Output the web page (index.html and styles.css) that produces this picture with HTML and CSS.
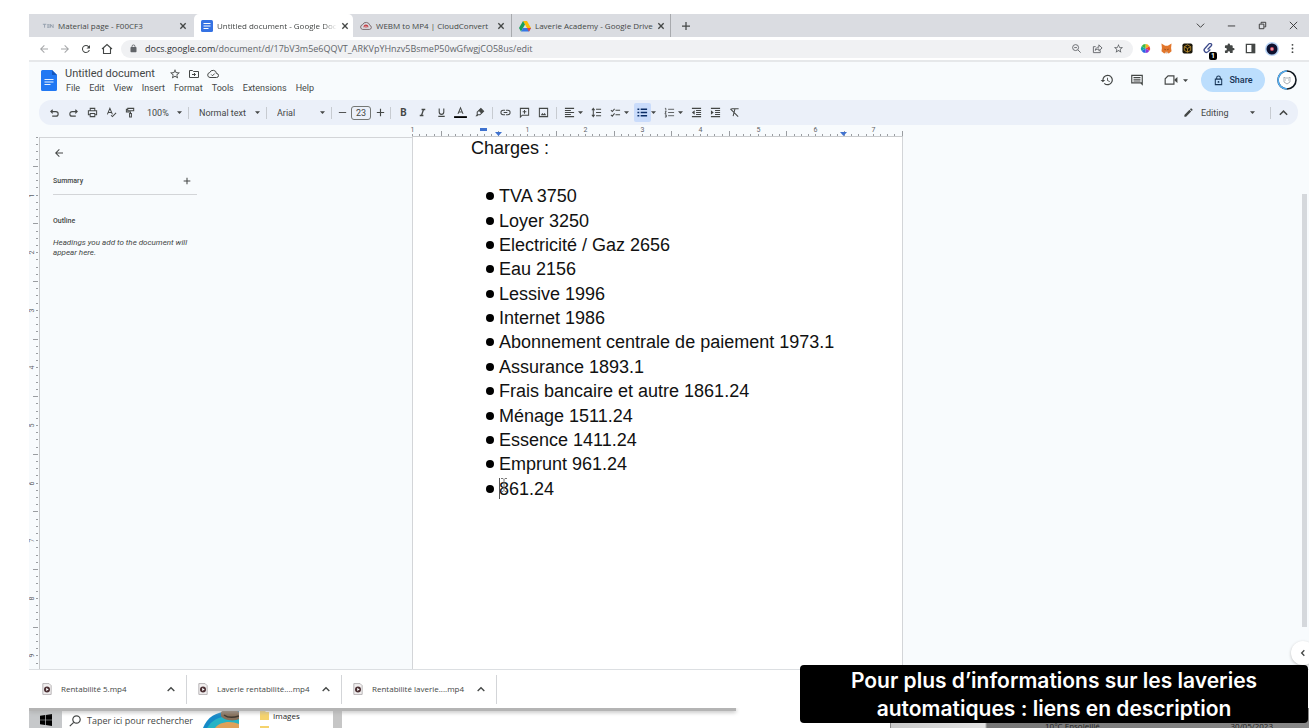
FILE: index.html
```html
<!DOCTYPE html>
<html lang="fr">
<head>
  <meta charset="UTF-8" />
  <meta name="viewport" content="width=device-width, initial-scale=1.0"/>
  <title>Untitled document - Google Docs</title>
  <link rel="stylesheet" href="styles.css">
</head>
<body>
  <svg class="defs" aria-hidden="true">
    <symbol id="close" viewBox="0 0 12 12"><path d="M2 2l8 8M10 2l-8 8" fill="none" stroke="currentColor" stroke-width="2"/></symbol>
    <symbol id="arrow" viewBox="0 0 10 10"><path d="M0 2.5h10L5 8z"/></symbol>
    <symbol id="up" viewBox="0 0 12 12"><path d="M2 8.5l4-4 4 4" fill="none" stroke="currentColor" stroke-width="1.600"/></symbol>
    <symbol id="back" viewBox="0 0 24 24"><path d="M20 11H7.83l5.59-5.59L12 4l-8 8 8 8 1.41-1.41L7.83 13H20v-2z"/></symbol>
    <symbol id="plus" viewBox="0 0 24 24"><path d="M20 13.250h-6.750V20h-2.500v-6.750H4v-2.500h6.750V4h2.500v6.750H20z"/></symbol>
    <symbol id="star" viewBox="0 0 24 24"><path d="M22 9.24l-7.19-.62L12 2 9.19 8.63 2 9.24l5.46 4.73L5.82 21 12 17.27 18.18 21l-1.63-7.03L22 9.24zM12 15.4l-3.76 2.27 1-4.28-3.32-2.88 4.38-.38L12 6.1l1.71 4.04 4.38.38-3.32 2.88 1 4.28L12 15.4z"/></symbol>
    <symbol id="lock" viewBox="0 0 24 24"><path d="M18 8h-1V6A5 5 0 0 0 7 6v2H6a2 2 0 0 0-2 2v10a2 2 0 0 0 2 2h12a2 2 0 0 0 2-2V10a2 2 0 0 0-2-2zM9 6a3 3 0 0 1 6 0v2H9z"/></symbol>
    <symbol id="video-file" viewBox="0 0 12 14"><path d="M1 .5h7.500L11 3v10.500H1z" fill="#f3f0f0" stroke="#aaa6a8"/><circle cx="6" cy="7.500" r="3.600" fill="#4b3034"/><path d="M5 5.500l3 2-3 2z" fill="#fff"/></symbol>
  </svg>

  <main class="browser">
    <div class="tabs">
      <div class="tab">
        <svg viewBox="0 0 14 12" fill="none" stroke="#8f9aa8"><path d="M1 4h4M3 4v4M6 4.500h3M6 6h3M6 7.500h3M10 8V4l3 4V4"/></svg>
        <span>Material page - F00CF3</span>
        <button aria-label="Fermer"><svg><use href="#close"/></svg></button>
      </div>
      <div class="tab active">
        <svg viewBox="0 0 12 12"><rect width="12" height="12" rx="1.500" fill="#3572e3"/><path d="M2.500 3.500h7M2.500 6h7M2.500 8.500h5" stroke="#fff" stroke-width="1.200"/></svg>
        <span>Untitled document - Google Doc</span>
        <button aria-label="Fermer"><svg><use href="#close"/></svg></button>
      </div>
      <div class="tab">
        <svg viewBox="0 0 14 12" fill="none" stroke="#6d5a5e"><path d="M3 10h8a2.400 2.400 0 0 0 .5-4.700A4.500 4.500 0 0 0 3 4.500 2.800 2.800 0 0 0 3 10z"/><path d="M4.800 7.500a2.200 2.200 0 1 1 4.300 0M7 8V5.500" stroke="#c73f45" stroke-width="1.300"/></svg>
        <span>WEBM to MP4 | CloudConvert</span>
        <button aria-label="Fermer"><svg><use href="#close"/></svg></button>
      </div>
      <div class="tab">
        <svg viewBox="0 0 24 22"><path d="M8 1h8l8 14h-8z" fill="#fbbc05"/><path d="M8 1l4 7-8 14-4-7z" fill="#169f59"/><path d="M8 15h16l-4 7H4z" fill="#3577e5"/><path d="M16 15h8l-4 7z" fill="#e94435"/></svg>
        <span>Laverie Academy - Google Drive</span>
        <button aria-label="Fermer"><svg><use href="#close"/></svg></button>
      </div>
      <button class="new-tab" aria-label="Nouvel onglet"><svg><use href="#plus"/></svg></button>
      <div class="window-buttons">
        <button aria-label="Rechercher"><svg viewBox="0 0 12 12"><path d="M2 4l4 4 4-4"/></svg></button>
        <button aria-label="Réduire"><svg viewBox="0 0 12 12"><path d="M2 6.500h8"/></svg></button>
        <button aria-label="Agrandir"><svg viewBox="0 0 12 12"><path d="M2.500 4.500h5v5h-5zM4.500 4V2.500h5v5H8"/></svg></button>
        <button aria-label="Quitter"><svg viewBox="0 0 12 12"><path d="M2 2l8 8M10 2l-8 8"/></svg></button>
      </div>
    </div>

    <div class="address-bar">
      <div class="nav">
        <button class="off" aria-label="Précédent"><svg><use href="#back"/></svg></button>
        <button class="off" aria-label="Suivant"><svg class="flip"><use href="#back"/></svg></button>
        <button aria-label="Actualiser"><svg viewBox="0 0 24 24"><path d="M17.650 6.350A8 8 0 1 0 19.730 14h-2.080A6 6 0 1 1 12 6c1.660 0 3.140.69 4.220 1.780L13 11h7V4l-2.350 2.350z"/></svg></button>
        <button aria-label="Accueil"><svg viewBox="0 0 24 24"><path d="M2 12l10-9 10 9M5 10v11h14V10" fill="none" stroke="currentColor" stroke-width="2.200"/></svg></button>
      </div>
      <div class="omnibox">
        <svg class="small"><use href="#lock"/></svg>
        <span class="url"><b>docs.google.com</b>/document/d/17bV3m5e6QQVT_ARKVpYHnzv5BsmeP50wGfwgjCO58us/edit</span>
        <button aria-label="Zoom"><svg viewBox="0 0 24 24" fill="none" stroke="currentColor" stroke-width="2"><circle cx="10" cy="10" r="6.500"/><path d="M15 15l6 6M7 10h6"/></svg></button>
        <button aria-label="Partager"><svg viewBox="0 0 24 24" fill="none" stroke="currentColor" stroke-width="2"><path d="M8 8H3v13h15v-5M7 16c1-5 4-7 8-7V4l7 7-7 6v-4c-3 0-6 1-8 3z"/></svg></button>
        <button aria-label="Favori"><svg><use href="#star"/></svg></button>
      </div>
      <div class="extensions">
        <button aria-label="Couleurs"><svg viewBox="0 0 12 12"><path d="M6 6V1a5 5 0 0 1 4.300 2.500z" fill="#f6b51d"/><path d="M6 6l4.300-2.500a5 5 0 0 1 0 5z" fill="#ee4433"/><path d="M6 6l4.300 2.500A5 5 0 0 1 6 11z" fill="#8d36d8"/><path d="M6 6v5a5 5 0 0 1-4.300-2.500z" fill="#2866e2"/><path d="M6 6L1.700 8.500a5 5 0 0 1 0-5z" fill="#13a7a7"/><path d="M6 6L1.700 3.500A5 5 0 0 1 6 1z" fill="#42b840"/></svg></button>
        <button aria-label="MetaMask"><svg viewBox="0 0 12 12"><path d="M.5.5L4.500 3h3l4-2.500-.5 5 .5 3.500-3 2.500-1.500-1H5l-1.500 1L.5 9 1 5.500z" fill="#e2762b"/><path d="M3 6l2 1v1zM9 6L7 7v1z" fill="#3a2216"/><path d="M4.500 9.500h3l-.5 2H5z" fill="#d9b9a0"/></svg></button>
        <button aria-label="Portefeuille"><svg viewBox="0 0 12 12"><rect x=".5" y=".5" width="11" height="11" rx="2" fill="#191509"/><path d="M6 2l3.500 2v4L6 10 2.500 8V4zM2.500 4L6 6l3.500-2M6 6v4" fill="none" stroke="#c2912c" stroke-width=".9"/></svg></button>
        <button class="badged" aria-label="Liens"><svg viewBox="0 0 12 12" fill="none" stroke="#3c4a8a" stroke-width="1.500"><path d="M5 7l4-4a1.600 1.600 0 0 0-2.500-2L2 6a2.400 2.400 0 0 0 3.500 3.400L8 7"/></svg><i>1</i></button>
        <button aria-label="Extensions"><svg viewBox="0 0 24 24"><path d="M20.500 11H19V7a2 2 0 0 0-2-2h-4V3.500a2.500 2.500 0 0 0-5 0V5H4a2 2 0 0 0-2 2v3.800h1.500a2.700 2.700 0 0 1 0 5.400H2V20a2 2 0 0 0 2 2h3.800v-1.500a2.700 2.700 0 0 1 5.400 0V22H17a2 2 0 0 0 2-2v-4h1.500a2.500 2.500 0 0 0 0-5z"/></svg></button>
        <button aria-label="Panneau latéral"><svg viewBox="0 0 12 12"><path d="M1.500 1.500h9v9h-9z" fill="none" stroke="currentColor" stroke-width="1.400"/><path d="M7 1h4v10H7z"/></svg></button>
        <button aria-label="Profil"><svg class="profile" viewBox="0 0 14 14"><circle cx="7" cy="7" r="7" fill="#b7d3f5"/><circle cx="7" cy="7" r="5.500" fill="#0d1230"/><circle cx="7" cy="7" r="2" fill="#d34a60"/><circle cx="7" cy="7" r=".8" fill="#fff"/></svg></button>
        <button aria-label="Menu"><svg viewBox="0 0 24 24"><circle cx="12" cy="4" r="2"/><circle cx="12" cy="12" r="2"/><circle cx="12" cy="20" r="2"/></svg></button>
      </div>
    </div>

    <header class="docs-header">
      <svg class="docs-logo" viewBox="0 0 16 21"><path d="M1.500 0H11l5 5v14.500a1.500 1.500 0 0 1-1.500 1.500h-13A1.500 1.500 0 0 1 0 19.500v-18A1.500 1.500 0 0 1 1.500 0z" fill="#2178f3"/><path d="M11 0l5 5h-5z" fill="#1356bd"/><path d="M3.500 9.500h9M3.500 12h9M3.500 14.500h6" stroke="#e8f1ff" stroke-width="1.200"/></svg>
      <div class="doc-info">
        <div class="doc-title">
          <h1>Untitled document</h1>
          <button aria-label="Suivre"><svg><use href="#star"/></svg></button>
          <button aria-label="Déplacer"><svg viewBox="0 0 24 24"><path d="M3 5h6l2 2h10v12H3zM8 13h7M12 10l3 3-3 3" fill="none" stroke="currentColor" stroke-width="2"/></svg></button>
          <button aria-label="Enregistré"><svg viewBox="0 0 24 24"><path d="M6 19a5 5 0 0 1-.5-9.900A7 7 0 0 1 19 11a4 4 0 0 1 0 8zM8.500 13l2.500 2.500 4.500-4.500" fill="none" stroke="currentColor" stroke-width="2"/></svg></button>
        </div>
        <nav class="menu">
          <a href="#">File</a>
          <a href="#">Edit</a>
          <a href="#">View</a>
          <a href="#">Insert</a>
          <a href="#">Format</a>
          <a href="#">Tools</a>
          <a href="#">Extensions</a>
          <a href="#">Help</a>
        </nav>
      </div>
      <div class="doc-actions">
        <button aria-label="Historique"><svg viewBox="0 0 24 24"><path d="M13 3a9 9 0 0 0-9 9H1l4 4 4-4H6a7 7 0 1 1 2.060 4.940L6.640 18.360A9 9 0 1 0 13 3zm-1 5v5l4.280 2.540.72-1.210-3.500-2.080V8H12z"/></svg></button>
        <button aria-label="Commentaires"><svg viewBox="0 0 24 24"><path d="M2 3h20v19l-4-4H2zM4 5v11h16V5zM6 7h12v1.500H6zM6 10h12v1.500H6zM6 13h12v1.500H6z" fill-rule="evenodd"/></svg></button>
        <button class="meet" aria-label="Appel"><svg viewBox="0 0 24 24"><path d="M7 5h10v14H2v-9z" fill="none" stroke="currentColor" stroke-width="2"/><path d="M18 11l5-4v10l-5-4z"/></svg><svg class="arrow"><use href="#arrow"/></svg></button>
        <button class="share"><svg viewBox="0 0 24 24"><path d="M5 9h14v12H5zM8 9V6a4 4 0 0 1 8 0v3" fill="none" stroke="currentColor" stroke-width="2.200"/><circle cx="12" cy="15" r="2"/></svg>Share</button>
        <button aria-label="Compte"><svg class="avatar" viewBox="0 0 20 20"><circle cx="10" cy="10" r="9" fill="#fff" stroke="#101820" stroke-width="1.600"/><path d="M10 1a9 9 0 0 0 0 18" fill="none" stroke="#55aef2" stroke-width="1.600"/><path d="M7 7l1 1h4l1-1v5l-3 2-3-2zM8 10h1M11 10h1" fill="none" stroke="#aab0b5"/></svg></button>
      </div>
    </header>

    <div class="format-bar">
      <button class="tool" aria-label="Annuler"><svg viewBox="0 0 24 24"><path d="M8 6l-4 4 4 4M4 10h11a5 5 0 0 1 0 10H7" fill="none" stroke="currentColor" stroke-width="2.400"/></svg></button>
      <button class="tool" aria-label="Rétablir"><svg viewBox="0 0 24 24"><path d="M16 6l4 4-4 4M20 10H9a5 5 0 0 0 0 10h8" fill="none" stroke="currentColor" stroke-width="2.400"/></svg></button>
      <button class="tool" aria-label="Imprimer"><svg viewBox="0 0 24 24"><path d="M7 8V3h10v5M6 17H3V8h18v9h-3M7 14h10v7H7z" fill="none" stroke="currentColor" stroke-width="2.200"/></svg></button>
      <button class="tool" aria-label="Orthographe"><svg viewBox="0 0 24 24"><path d="M3 16L8.500 3 14 16M5 12h7M11 18l3 3 8-8" fill="none" stroke="currentColor" stroke-width="2.200"/></svg></button>
      <button class="tool" aria-label="Reproduire"><svg viewBox="0 0 24 24"><path d="M6 3h13v5H6zM6 5H3v6h9v3M10 14h4v8h-4z" fill="none" stroke="currentColor" stroke-width="2.200"/></svg></button>
      <label class="drop zoom"><select aria-label="Zoom"><option>100%</option></select><svg class="arrow"><use href="#arrow"/></svg></label>
      <hr>
      <label class="drop style"><select aria-label="Style"><option>Normal text</option></select><svg class="arrow"><use href="#arrow"/></svg></label>
      <hr>
      <label class="drop font"><select aria-label="Police"><option>Arial</option></select><svg class="arrow"><use href="#arrow"/></svg></label>
      <hr>
      <button class="step" aria-label="Diminuer"><svg viewBox="0 0 24 24"><path d="M4 11h16v2H4z"/></svg></button>
      <input class="size" type="text" value="23" aria-label="Taille">
      <button class="step" aria-label="Augmenter"><svg><use href="#plus"/></svg></button>
      <hr>
      <button class="tool" aria-label="Gras"><b>B</b></button>
      <button class="tool" aria-label="Italique"><svg viewBox="0 0 24 24"><path d="M10 4v3h2.200l-3.400 10H6v3h8v-3h-2.200l3.400-10H18V4z"/></svg></button>
      <button class="tool" aria-label="Souligné"><svg viewBox="0 0 24 24"><path d="M7 3v8a5 5 0 0 0 10 0V3M5 20.500h14" fill="none" stroke="currentColor" stroke-width="2.400"/></svg></button>
      <button class="tool" aria-label="Couleur"><svg class="text-color" viewBox="0 0 24 24"><path d="M6.500 15L12 2l5.500 13M8 11h8" fill="none" stroke="currentColor" stroke-width="2.200"/><path d="M-2 20h28v4H-2z" fill="#000"/></svg></button>
      <button class="tool" aria-label="Surligner"><svg viewBox="0 0 24 24"><path d="M7 11l8-8 6 6-8 8H7z" fill="none" stroke="currentColor" stroke-width="2.200"/><path d="M10 8l6 6 5-5-6-6zM3 20l4-4 2 2-2 2z"/></svg></button>
      <hr>
      <button class="tool" aria-label="Lien"><svg viewBox="0 0 24 24"><path d="M11 7H7a5 5 0 0 0 0 10h4M13 7h4a5 5 0 0 1 0 10h-4M8 12h8" fill="none" stroke="currentColor" stroke-width="2.200"/></svg></button>
      <button class="tool" aria-label="Commenter"><svg viewBox="0 0 24 24"><path d="M3 3h18v15H7l-4 4zM12 6.500v8M8 10.500h8" fill="none" stroke="currentColor" stroke-width="2.200"/></svg></button>
      <button class="tool" aria-label="Image"><svg viewBox="0 0 24 24"><path d="M3 3h18v18H3z" fill="none" stroke="currentColor" stroke-width="2.200"/><path d="M6 18l3.500-5 2.500 3 2.500-3 3.500 5z"/></svg></button>
      <hr>
      <button class="split" aria-label="Aligner"><svg viewBox="0 0 24 24"><path d="M2 3h20M2 7.500h13M2 12h20M2 16.500h13M2 21h20" stroke="currentColor" stroke-width="2.200"/></svg><svg class="arrow"><use href="#arrow"/></svg></button>
      <button class="tool" aria-label="Interligne"><svg viewBox="0 0 24 24"><path d="M11 5h11M11 12h11M11 19h11M5 4v16M2 7l3-4 3 4M2 17l3 4 3-4" fill="none" stroke="currentColor" stroke-width="2.200"/></svg></button>
      <button class="split" aria-label="Liste de contrôle"><svg viewBox="0 0 24 24"><path d="M12 7h10M12 17h10M2 7l3 3 5-6M2 17l3 3 5-6" fill="none" stroke="currentColor" stroke-width="2.200"/></svg><svg class="arrow"><use href="#arrow"/></svg></button>
      <button class="split on" aria-label="Liste à puces"><span><svg viewBox="0 0 24 24"><path d="M8 5h14M8 12h14M8 19h14M1 5h4M1 12h4M1 19h4" stroke="currentColor" stroke-width="3"/></svg></span><svg class="arrow"><use href="#arrow"/></svg></button>
      <button class="split" aria-label="Liste numérotée"><svg viewBox="0 0 24 24"><path d="M9 5h13M9 12h13M9 19h13M2 3h2v5M2 10h3l-3 4h3M2 17h3v5H2M3 19.500h2" fill="none" stroke="currentColor" stroke-width="1.800"/></svg><svg class="arrow"><use href="#arrow"/></svg></button>
      <button class="tool" aria-label="Retrait moins"><svg viewBox="0 0 24 24"><path d="M2 3h20M11 7.500h11M11 12h11M11 16.500h11M2 21h20" stroke="currentColor" stroke-width="2.200"/><path d="M8 7v10l-6-5z"/></svg></button>
      <button class="tool" aria-label="Retrait plus"><svg viewBox="0 0 24 24"><path d="M2 3h20M11 7.500h11M11 12h11M11 16.500h11M2 21h20" stroke="currentColor" stroke-width="2.200"/><path d="M2 7v10l6-5z"/></svg></button>
      <button class="tool" aria-label="Effacer"><svg viewBox="0 0 24 24"><path d="M5 4h16M13 4l-4 16M3 4l17 17" fill="none" stroke="currentColor" stroke-width="2.200"/></svg></button>
      <div class="mode">
        <svg viewBox="0 0 24 24"><path d="M3 17.250V21h3.750L17.810 9.940l-3.750-3.750zM20.710 7.040a1 1 0 0 0 0-1.410l-2.340-2.340a1 1 0 0 0-1.410 0l-1.830 1.830 3.750 3.750z"/></svg>
        <label class="drop editing"><select aria-label="Mode"><option>Editing</option></select><svg class="arrow"><use href="#arrow"/></svg></label>
        <hr>
        <button class="step" aria-label="Masquer"><svg><use href="#up"/></svg></button>
      </div>
    </div>

    <div class="ruler-row">
      <svg class="ruler" id="ruler-h"></svg>
    </div>

    <div class="workspace">
      <div class="left">
        <svg class="ruler" id="ruler-v"></svg>
        <aside class="outline">
          <button class="close-outline" aria-label="Fermer le plan"><svg><use href="#back"/></svg></button>
          <div class="summary">
            <h2>Summary</h2>
            <button aria-label="Ajouter un résumé"><svg><use href="#plus"/></svg></button>
          </div>
          <h2>Outline</h2>
          <p>Headings you add to the document will appear here.</p>
        </aside>
      </div>
      <article class="page">
        <p>Charges :</p>
        <ul>
          <li>TVA 3750</li>
          <li>Loyer 3250</li>
          <li>Electricité / Gaz 2656</li>
          <li>Eau 2156</li>
          <li>Lessive 1996</li>
          <li>Internet 1986</li>
          <li>Abonnement centrale de paiement 1973.1</li>
          <li>Assurance 1893.1</li>
          <li>Frais bancaire et autre 1861.24</li>
          <li>Ménage 1511.24</li>
          <li>Essence 1411.24</li>
          <li>Emprunt 961.24</li>
          <li class="caret">861.24<svg class="pointer" viewBox="0 0 8 16" fill="none" stroke="#777"><path d="M1 1.500h2l1 1 1-1h2M4 2.500v11M1 14.500h2l1-1 1 1h2"/></svg></li>
        </ul>
      </article>
      <div class="scrollbar"><div class="thumb"></div></div>
      <button class="side-panel" aria-label="Panneau"><svg viewBox="0 0 12 12"><path d="M8 2L4 6l4 4" fill="none" stroke="currentColor" stroke-width="2"/></svg></button>
    </div>

    <footer class="downloads">
      <div class="download"><svg><use href="#video-file"/></svg><span>Rentabilité 5.mp4</span><button aria-label="Options"><svg><use href="#up"/></svg></button></div>
      <div class="download"><svg><use href="#video-file"/></svg><span>Laverie rentabilité....mp4</span><button aria-label="Options"><svg><use href="#up"/></svg></button></div>
      <div class="download"><svg><use href="#video-file"/></svg><span>Rentabilité laverie....mp4</span><button aria-label="Options"><svg><use href="#up"/></svg></button></div>
    </footer>
  </main>

  <div class="taskbar">
    <div class="window-edge"></div>
    <button class="start" aria-label="Démarrer"><svg viewBox="0 0 12 12"><path d="M0 1.700l5-.7v4.700H0zM5.700.9L12 0v5.700H5.700zM0 6.300h5V11l-5-.7zM5.700 6.300H12V12l-6.300-.9z"/></svg></button>
    <div class="search">
      <svg viewBox="0 0 12 12" fill="none" stroke="currentColor" stroke-width="1.200"><circle cx="7.500" cy="4.500" r="3.700"/><path d="M4.700 7.300L.8 11.200"/></svg>
      <span>Taper ici pour rechercher</span>
      <svg class="news" viewBox="0 0 36 17"><path d="M0 17C5 4 16-1 36 0v17z" fill="#168ac8"/><path d="M4 17C10 7 20 3 36 7v10z" fill="#25b3c5"/><path d="M12 17c4-6 15-8 24-4v4z" fill="#e0a159"/><path d="M18 1c3-3 14-3 18 0v7c-6 3-16 1-18-3z" fill="#86705b"/><path d="M21 4c4 3 9 3 15 1" fill="none" stroke="#40382f" stroke-width="1.500"/></svg>
    </div>
    <div class="explorer">
      <svg viewBox="0 0 9 18"><path d="M0 1h5l1 1h3v8H0zM0 16h9v2H0z" fill="#f5d36d"/></svg>
      <span>Images</span>
    </div>
    <div class="tray"><span>10°C Ensoleillé</span><time>30/05/2023</time></div>
  </div>

  <div class="caption">Pour plus d’informations sur les laveries automatiques : liens en description</div>

  <script src="script.js"></script>
</body>
</html>
```
FILE: styles.css
```css
* {
  box-sizing: border-box;
}
body {
  display: flex;
  flex-direction: column;
  height: 100vh;
  margin: 0;
  padding: 14px 4px 0 29px;
  overflow: hidden;
  background: #fff;
  color: #444746;
  font: 9px/12px Roboto, sans-serif;
}
button {
  display: flex;
  align-items: center;
  justify-content: center;
  flex: none;
  padding: 0;
  border: 0;
  background: none;
  color: inherit;
  font: inherit;
}
svg {
  display: block;
  flex: none;
  width: 12px;
  height: 12px;
}
svg:not([fill]) {
  fill: currentColor;
}
h1, h2, p, ul {
  margin: 0;
  padding: 0;
}
a {
  color: inherit;
  text-decoration: none;
}
.defs {
  display: none;
}
.arrow {
  width: 5px;
  height: 5px;
}
.browser {
  display: flex;
  flex: 1;
  flex-direction: column;
  min-height: 0;
  background: #f8fbfd;
}

/* Chrome */
.tabs {
  display: flex;
  align-items: center;
  height: 23px;
  background: #dadce1;
  font: 8px/12px "Open Sans", sans-serif;
}
.tab {
  display: flex;
  align-items: center;
  gap: 4px;
  width: 159px;
  height: 23px;
  padding: 0 6px 0 13px;
  border-right: 1px solid transparent;
}
.tab:nth-child(n+3) {
  border-color: #a8aaae;
  padding-left: 7px;
}
.tab:first-child {
  width: 165px;
}
.tab span {
  flex: 1;
  white-space: nowrap;
}
.tab button svg {
  width: 8px;
  height: 8px;
}
.tab.active {
  padding-left: 7px;
  border-radius: 5px 5px 0 0;
  background: #fff;
}
.tab.active span {
  mask-image: linear-gradient(to right, #000 88%, transparent);
}
.new-tab {
  width: 30px;
}
.window-buttons {
  display: flex;
  margin-left: auto;
}
.window-buttons button {
  width: 31px;
}
.window-buttons svg {
  width: 11px;
  height: 11px;
}
.window-buttons path {
  fill: none;
  stroke: #333;
}
.address-bar {
  display: flex;
  align-items: center;
  height: 25px;
  border-bottom: 2px solid #e6e8ea;
  background: #fff;
}
.nav, .extensions {
  display: flex;
  padding: 0 4px;
}
.nav button, .extensions button, .omnibox button {
  width: 21px;
}
.off {
  color: #a4a6a8;
}
.flip {
  transform: scaleX(-1);
}
.omnibox {
  display: flex;
  align-items: center;
  flex: 1;
  height: 18px;
  padding: 0 4px 0 8px;
  border-radius: 9px;
  background: #f0f1f3;
  color: #626569;
}
.url {
  flex: 1;
  margin-left: 7px;
  font-family: "Open Sans", sans-serif;
}
.url b {
  color: #303236;
  font-weight: 400;
}
.omnibox svg, .extensions svg {
  width: 11px;
  height: 11px;
}
.omnibox .small {
  width: 9px;
  height: 9px;
}
.extensions {
  padding: 0 6px 0 2px;
}
.extensions .profile {
  width: 14px;
  height: 14px;
}
.badged {
  position: relative;
}
.badged i {
  position: absolute;
  right: 2px;
  bottom: -4px;
  width: 8px;
  border-radius: 2px;
  background: #000;
  color: #fff;
  font: bold 7px/8px Roboto, sans-serif;
}

/* Docs header */
.docs-header {
  display: flex;
  align-items: center;
  height: 36px;
  margin-bottom: 2px;
  padding: 0 12px;
}
.docs-logo {
  width: 16px;
  height: 21px;
}
.doc-info {
  margin-left: 8px;
}
.doc-title {
  display: flex;
  align-items: center;
  gap: 7px;
  height: 16px;
}
.doc-title h1 {
  margin-right: 7px;
  font: 11px/16px Roboto, sans-serif;
}
.menu {
  display: flex;
  gap: 9px;
  margin-left: 1px;
}
.doc-actions {
  display: flex;
  align-items: center;
  gap: 16px;
  margin-left: auto;
}
.doc-actions svg {
  width: 14px;
  height: 14px;
}
.meet {
  gap: 5px;
  margin-left: 4px;
}
.doc-actions .arrow {
  width: 5px;
  height: 5px;
}
.doc-actions .share {
  gap: 5px;
  width: 64px;
  height: 24px;
  margin: 0 -4px 0 -3px;
  border-radius: 12px;
  background: #bcdefd;
  color: #173455;
  font-weight: 500;
}
.doc-actions .share svg {
  width: 11px;
  height: 11px;
}
.doc-actions .avatar {
  width: 20px;
  height: 20px;
}

/* Formatting toolbar */
.format-bar {
  display: flex;
  align-items: center;
  height: 25px;
  margin: 0 11px 0 10px;
  padding: 0 6px;
  border-radius: 12px;
  background: #ebf0f9;
}
.format-bar svg {
  width: 11px;
  height: 11px;
}
.format-bar .arrow {
  width: 5px;
  height: 5px;
}
.format-bar .text-color {
  overflow: visible;
}
.format-bar hr {
  width: 1px;
  height: 12px;
  margin: 0 3px;
  border: 0;
  background: #c7cbd1;
}
.tool {
  width: 19px;
}
.step {
  width: 14px;
}
.tool b {
  font-size: 10px;
}
.split {
  gap: 3px;
  width: 27px;
}
.split.on span {
  margin: 0 -3px;
  padding: 4px 3px;
  border-radius: 2px;
  background: #cadcfb;
  color: #0b2d66;
}
.drop {
  display: flex;
  align-items: center;
  padding: 0 3px 0 7px;
}
.drop select {
  flex: 1;
  min-width: 0;
  padding: 0;
  border: 0;
  appearance: none;
  background: none;
  color: inherit;
  font: inherit;
}
.zoom {
  width: 45px;
}
.style {
  width: 71px;
}
.font {
  width: 58px;
}
.editing {
  width: 64px;
}
.size {
  width: 20px;
  height: 14px;
  margin: 0 2px;
  padding: 0;
  border: 1px solid #747775;
  border-radius: 3px;
  background: none;
  color: inherit;
  font: inherit;
  text-align: center;
}
.mode {
  display: flex;
  align-items: center;
  margin-left: auto;
}
.mode hr {
  margin: 0 4px 0 12px;
}
.mode .step {
  width: 17px;
}

/* Ruler and document */
.ruler-row, .workspace {
  display: grid;
  grid-template-columns: 1fr 491px 1fr;
  padding-right: 23px;
}
.ruler {
  overflow: visible;
  stroke: #9a9da1;
  font: 7px Roboto, sans-serif;
}
.ruler text {
  fill: #5f6368;
  stroke: none;
  text-anchor: middle;
}
.ruler .marker {
  fill: #3f72cf;
  stroke: none;
}
#ruler-h {
  grid-column: 2;
  width: 491px;
  height: 12px;
  border-bottom: 1px solid #c8cacc;
}
#ruler-v {
  width: 10px;
  height: 100%;
}
.workspace {
  position: relative;
  flex: 1;
  min-height: 0;
  overflow: hidden;
}
.left {
  display: flex;
  min-height: 0;
}
.outline {
  flex: 1;
  padding: 9px 0 0 13px;
  border-top: 1px solid #d3d5d8;
  border-left: 1px solid #c8cacc;
}
.outline h2 {
  font: 500 7px/12px Roboto, sans-serif;
}
.outline p {
  width: 150px;
  margin-top: 11px;
  font: italic 8px/10px Roboto, sans-serif;
}
.summary {
  display: flex;
  align-items: center;
  justify-content: space-between;
  width: 144px;
  height: 28px;
  margin: 8px 0 20px;
  padding-right: 5px;
  border-bottom: 1px solid #d3d5d8;
}
.summary svg {
  width: 10px;
  height: 10px;
}
.page {
  padding-left: 58px;
  border: solid #d3d5d8;
  border-width: 0 1px;
  background: #fff;
  color: #111;
  font: 18px/22px "Liberation Sans", Arial, sans-serif;
}
.page ul {
  display: grid;
  grid-auto-rows: 1fr;
  height: 317px;
  margin-top: 25px;
  list-style: none;
}
.page li {
  display: flex;
  align-items: center;
  padding-left: 15px;
}
.page li::before {
  width: 8px;
  height: 8px;
  margin-right: 5px;
  border-radius: 50%;
  background: #000;
  content: "";
}
.page .caret {
  position: relative;
}
.caret::after {
  position: absolute;
  left: 28px;
  width: 1px;
  height: 21px;
  background: #555;
  content: "";
}
.pointer {
  position: absolute;
  left: 29px;
  top: 0;
  width: 8px;
  height: 16px;
}
.scrollbar {
  position: absolute;
  top: 0;
  right: 0;
  bottom: 0;
  width: 8px;
  padding: 57px 2px 42px 1px;
}
.thumb {
  height: 100%;
  background: #d5d8dc;
}
.side-panel {
  position: absolute;
  right: -6px;
  bottom: 4px;
  width: 24px;
  height: 24px;
  border-radius: 50%;
  background: #fff;
  box-shadow: 0 1px 3px #bbb;
}
.side-panel svg {
  width: 8px;
  height: 8px;
}

/* Downloads */
.downloads {
  display: flex;
  align-items: center;
  height: 39px;
  border-top: 1px solid #dcdfe2;
  background: #fff;
  font: 8px/12px "Open Sans", sans-serif;
}
.download {
  display: flex;
  align-items: center;
  gap: 9px;
  width: 155px;
  height: 29px;
  padding: 0 10px 0 11px;
  border-right: 1px solid #d3d5d8;
}
.download:first-child {
  width: 158px;
  padding-left: 13px;
}
.download > svg {
  width: 10px;
}
.download span {
  flex: 1;
  white-space: nowrap;
}
.download button svg {
  width: 10px;
  height: 10px;
}

/* Windows taskbar */
.taskbar {
  position: relative;
  display: flex;
  height: 20px;
  overflow: hidden;
  font-family: "Open Sans", sans-serif;
}
.window-edge {
  position: absolute;
  top: 0;
  left: 0;
  width: 707px;
  height: 3px;
  background: #b4b4b4;
  box-shadow: 0 1px 4px #aaa;
}
.start {
  width: 33px;
  padding-top: 4px;
  background: #c6c8ca;
  color: #000;
}
.search {
  display: flex;
  gap: 6px;
  padding: 7px 0 0 7px;
}
.search span {
  width: 110px;
}
.news {
  width: 36px;
  height: 17px;
  margin-top: -4px;
}
.explorer {
  display: flex;
  gap: 4px;
  width: 82px;
  margin-left: 21px;
  padding-top: 2px;
  border-right: 9px solid #c6c6c6;
  color: #222;
  font-size: 8px;
}
.explorer svg {
  width: 9px;
  height: 18px;
}
.tray {
  display: flex;
  justify-content: space-between;
  width: 419px;
  margin-left: auto;
  padding: 13px 36px 0 154px;
  border-left: 1px solid #888;
  background: linear-gradient(to right, #c9c9c9, #e2e2e2 94px, #777 96px, #888);
  color: #222;
  font-size: 8px;
  line-height: 10px;
}

/* Subtitle over the screen */
.caption {
  position: fixed;
  right: 5px;
  bottom: 5px;
  width: 508px;
  padding: 2px 40px 0;
  border-radius: 4px;
  background: #000;
  color: #fff;
  font: 600 21px/28px Inter, sans-serif;
  text-align: center;
}
```
FILE: script.js
```js
const inch = 57.6;

function add(svg, name, attrs, text) {
  const el = document.createElementNS("http://www.w3.org/2000/svg", name);
  for (const key in attrs) el.setAttribute(key, attrs[key]);
  if (text) el.textContent = text;
  svg.appendChild(el);
}

// Horizontal ruler: zero is one inch into the page
const h = document.getElementById("ruler-h");
for (let i = 0; i <= 68; i++) {
  const x = Math.round(i * inch / 8) + 0.5;
  const size = i % 8 === 4 ? 5 : 2;
  add(h, "path", { d: `M${x} ${11 - size}v${size}` });
  if (i % 8 === 0 && i !== 8) {
    add(h, "text", { x: x, y: 7 }, Math.abs(i / 8 - 1));
  }
}
add(h, "path", { class: "marker", d: "M68 3h7v3h-7z" });
add(h, "path", { class: "marker", d: "M83 7h7l-3.500 4z" });
add(h, "path", { class: "marker", d: "M428 7h7l-3.500 4z" });

// Vertical ruler
const v = document.getElementById("ruler-v");
for (let i = 0; i <= 73; i++) {
  const y = Math.round(i * inch / 8) + 0.5;
  const size = i % 8 === 4 ? 5 : 2;
  add(v, "path", { d: `M${9 - size} ${y}h${size}` });
  if (i % 8 === 0 && i > 0) {
    add(v, "text", { transform: `translate(5 ${y}) rotate(-90)` }, i / 8);
  }
}
```
